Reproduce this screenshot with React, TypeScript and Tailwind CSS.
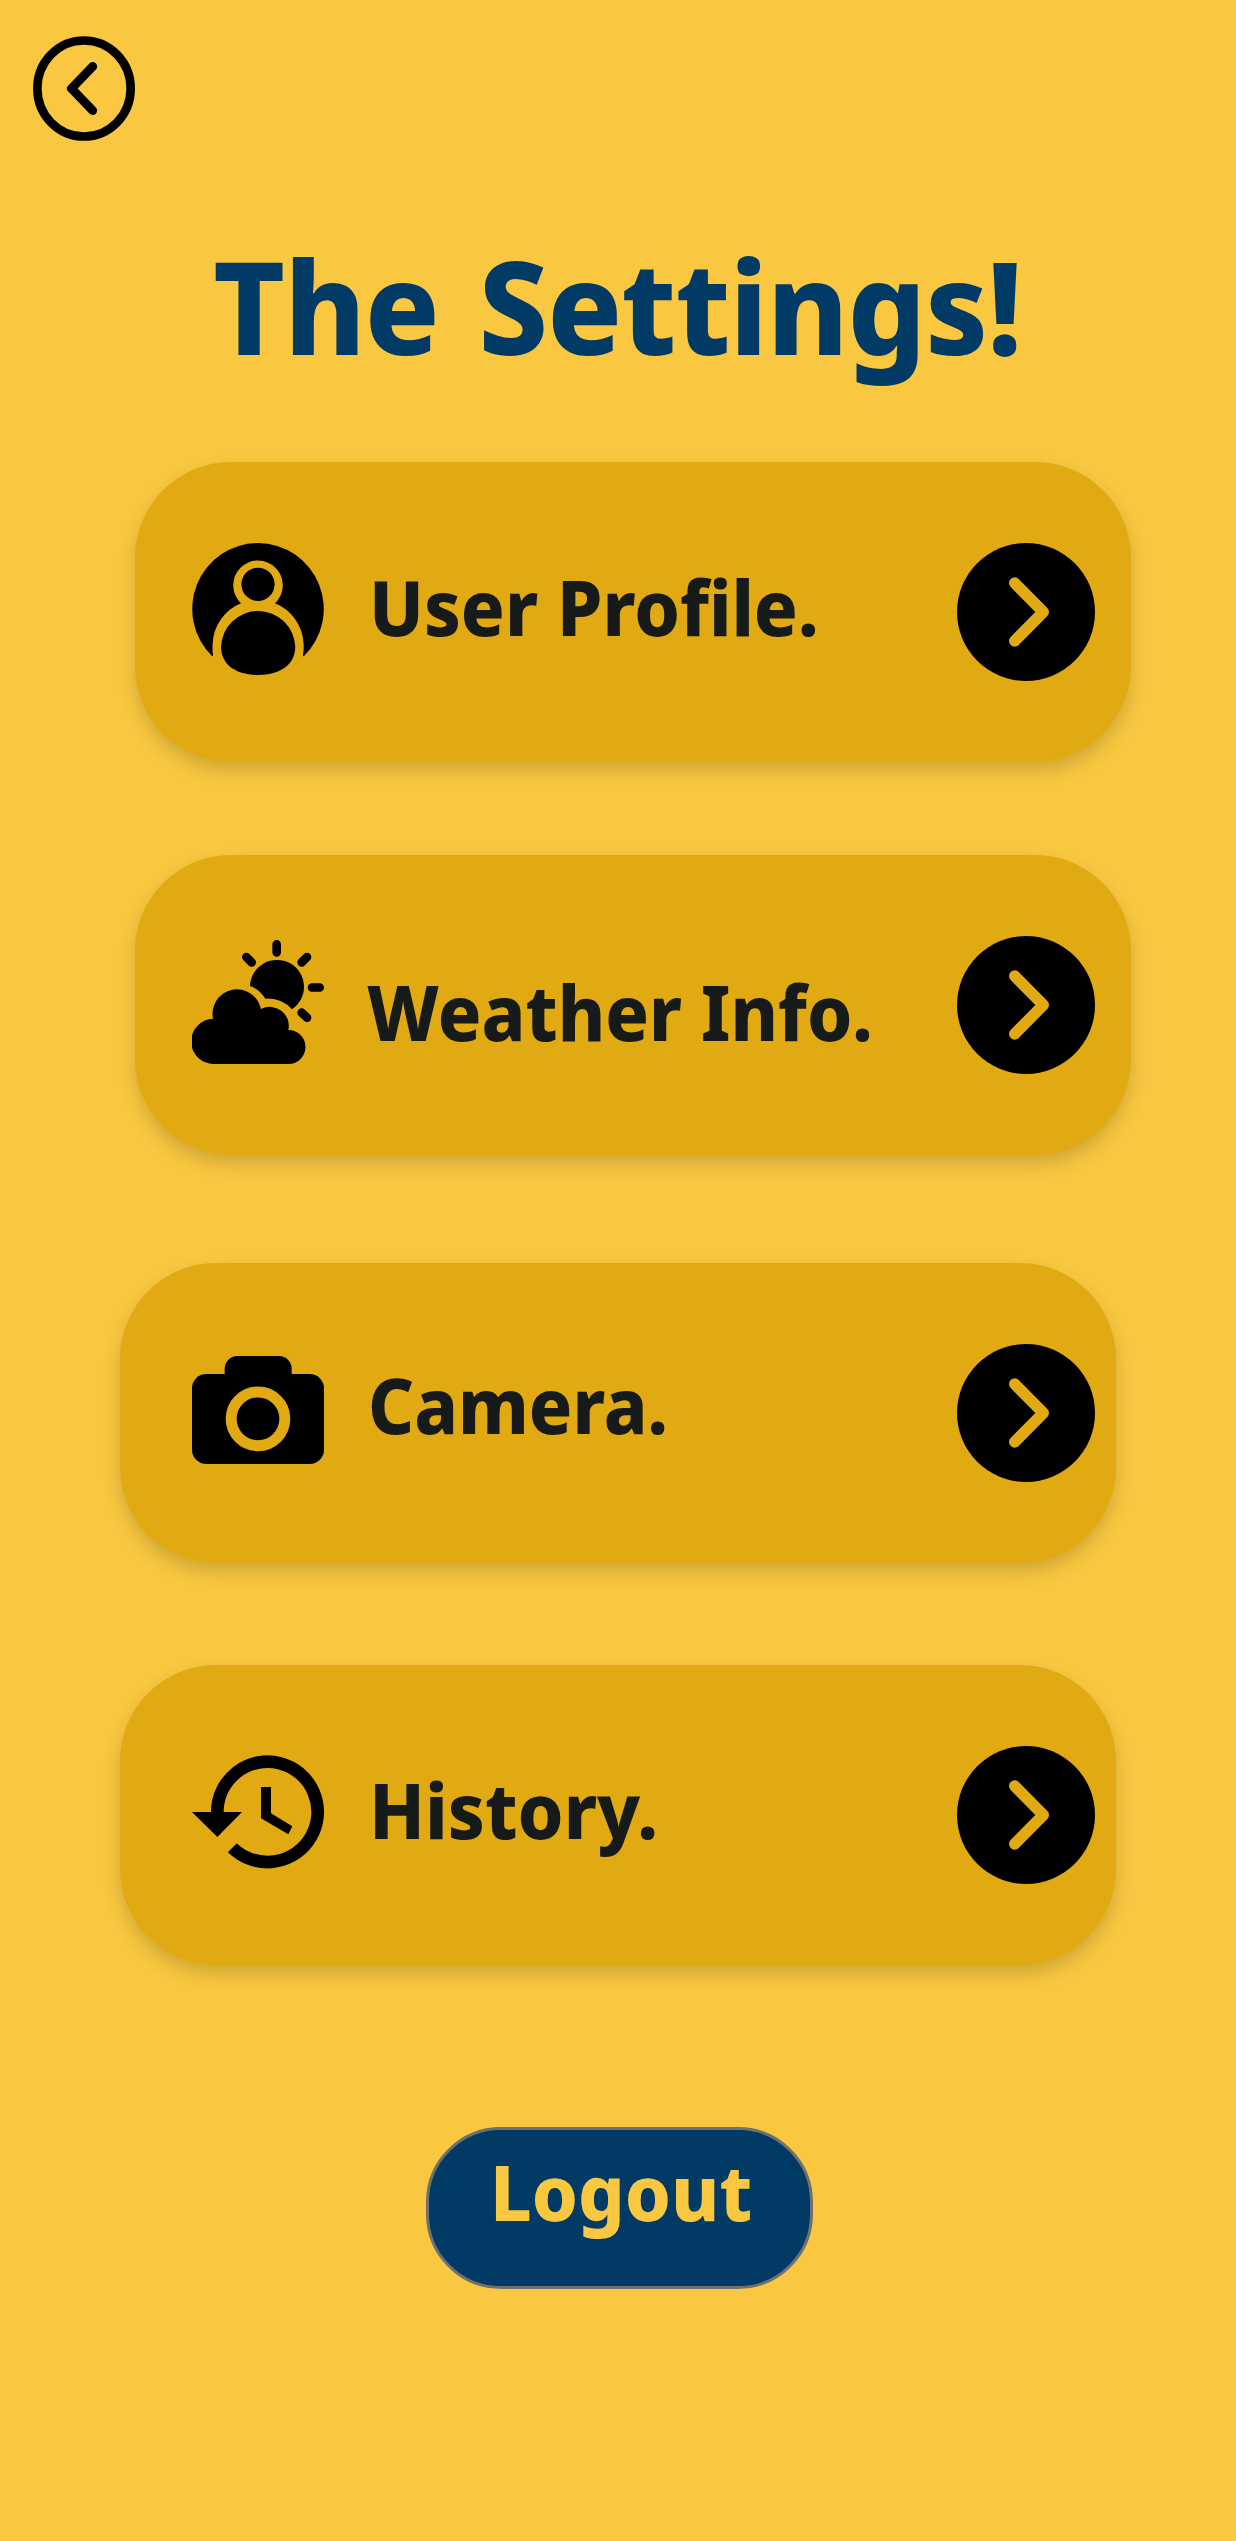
import React from "react";

function BackIcon() {
  return (
    <svg viewBox="39 48 306 314" className="block h-[105px] w-[102px]" fill="none" stroke="#000">
      <ellipse cx="192" cy="205" rx="140" ry="144" strokeWidth="26" />
      <path d="M218 139 154.500 205 218 271" strokeWidth="27" strokeLinecap="round" strokeLinejoin="round" />
    </svg>
  );
}

function UserIcon() {
  return (
    <svg viewBox="0 0 132 132" className="block size-[132px] overflow-visible">
      <path d="M20.2 113.3A66 66 0 0 1 66 0A66 66 0 0 1 111.8 113.3Q111 113.6 111 112Q112 107 111.6 101A45.5 45.5 0 0 0 83 60.3A24.8 24.8 0 1 0 49 60.3A45.5 45.5 0 0 0 20.6 101Q20.2 107 21 112Q21 113.6 20.2 113.3Z" />
      <circle cx="66" cy="41.3" r="16.6" />
      <path d="M29 103.3A37.2 37.2 0 0 1 103.3 103.3C103.3 122 88 132 66 132S29 122 29 103.3Z" />
    </svg>
  );
}

function WeatherIcon() {
  return (
    <svg viewBox="66 60 396 372" className="block h-[124px] w-[132px]">
      <path
        d="M320 73V97M229 111 245 127M411 111 395 127M426 202.500H449M395 278 411 293"
        stroke="#000"
        strokeWidth="26"
        strokeLinecap="round"
      />
      <path d="M366 268A81 81 0 1 0 240 198Q268 208 286 236Q334 233 366 268Z" />
      <path d="M134 432A68 68 0 0 1 129 296A73 73 0 0 1 273 267A57 57 0 0 1 355 330A51 51 0 0 1 356 432Z" />
    </svg>
  );
}

function CameraIcon() {
  return (
    <svg viewBox="66 78 396 324" className="block h-[108px] w-[132px]">
      <rect x="66" y="132" width="396" height="270" rx="43" />
      <path d="M164 140V116A38 38 0 0 1 202 78H327A38 38 0 0 1 365 116V140Z" />
      <circle cx="264" cy="266.500" r="80.500" fill="none" stroke="#e1a912" strokeWidth="33" />
    </svg>
  );
}

function HistoryIcon() {
  return (
    <svg viewBox="66 75 396 342" className="block h-[114px] w-[132px]">
      <path d="M142 250V246A150.500 150.500 0 1 1 187 353" fill="none" stroke="#000" strokeWidth="38" />
      <path d="M66 246H216L142 321Z" />
      <path d="M273 171H303V250L367 289 355 313 273 265Z" />
    </svg>
  );
}

function ChevronDisc() {
  return (
    <svg viewBox="0 0 414 414" className="mt-[81px] block size-[138px] shrink-0">
      <circle cx="207" cy="207" r="207" />
      <path
        d="M173 120 259 207 173 294"
        fill="none"
        stroke="#e1a912"
        strokeWidth="34"
        strokeLinecap="round"
        strokeLinejoin="round"
      />
    </svg>
  );
}

const items = [
  {
    label: "User Profile.",
    icon: <UserIcon />,
    card: "ml-[135px] pl-[57px] pr-9",
    iconTop: "mt-[81px]",
    text: "ml-[45px] mt-[95px] scale-x-[0.943]",
  },
  {
    label: "Weather Info.",
    icon: <WeatherIcon />,
    card: "ml-[135px] mt-[93px] pl-[57px] pr-9",
    iconTop: "mt-[85px]",
    text: "ml-[43px] mt-[107px] scale-x-[0.937]",
  },
  {
    label: "Camera.",
    icon: <CameraIcon />,
    card: "ml-[120px] mt-[108px] pl-[72px] pr-[21px]",
    iconTop: "mt-[93px]",
    text: "ml-11 mt-[92px] scale-x-[0.932]",
  },
  {
    label: "History.",
    icon: <HistoryIcon />,
    card: "ml-[120px] mt-[102px] pl-[72px] pr-[21px]",
    iconTop: "mt-[90px]",
    text: "ml-[45px] mt-[95px] scale-x-[0.95]",
  },
];

export default function App() {
  return (
    <main className="flex h-[2541px] w-[1236px] flex-col overflow-hidden bg-[#f9c840] font-['Noto_Sans',sans-serif] font-[770]">
      <button aria-label="Back" className="ml-[33px] mt-9 size-fit">
        <BackIcon />
      </button>
      <h1 className="ml-[213px] mt-[84px] h-[237px] origin-left scale-x-[0.958] whitespace-nowrap text-[129px] leading-[160px] tracking-[-1px] text-[#023a66] [word-spacing:9px]">
        The Settings!
      </h1>
      {items.map((item) => (
        <button
          key={item.label}
          className={`flex h-[300px] w-[996px] shrink-0 items-start rounded-[96px] bg-[#e1a912] text-left shadow-[0_9px_18px_rgba(0,0,0,0.16)] ${item.card}`}
        >
          <span className={`shrink-0 ${item.iconTop}`}>{item.icon}</span>
          <span
            className={`flex-1 origin-left whitespace-nowrap text-[77px] leading-[100px] text-[#161a18] ${item.text}`}
          >
            {item.label}
          </span>
          <ChevronDisc />
        </button>
      ))}
      <button className="ml-[426px] mt-[162px] h-[162px] w-[387px] shrink-0 rounded-[75px] border-3 border-[#707070] bg-[#023a66] pb-[33px] pl-[61px] text-left text-[77px] leading-[100px] text-[#f9c840]">
        <span className="block origin-left scale-x-[0.953]">Logout</span>
      </button>
    </main>
  );
}
